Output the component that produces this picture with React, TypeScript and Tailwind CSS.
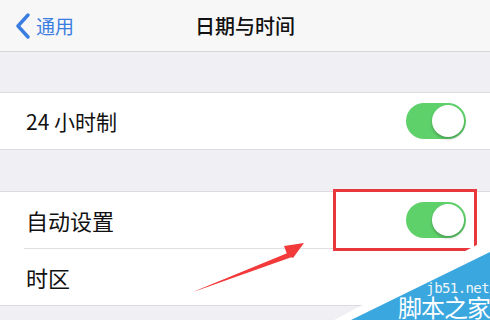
import React from "react";

function Toggle() {
  return (
    <div className="relative h-[36px] w-[60px] rounded-full bg-[#5fd16b]">
      <div className="absolute right-[2px] top-[2px] h-[32px] w-[32px] rounded-full bg-white shadow-[0_2px_3px_rgba(0,0,0,0.25)]" />
    </div>
  );
}

export default function App() {
  return (
    <div
      className="relative h-[320px] w-[490px] overflow-hidden bg-[#efeff4]"
      style={{ fontFamily: '"Noto Sans CJK SC", "Noto Sans", sans-serif' }}
    >
      {/* Nav bar */}
      <div className="relative flex h-[52px] items-center border-b border-[#d6d6da] bg-[#f7f7f8]">
        <div className="flex items-center pl-[14px] text-[#3a7de0]">
          <svg width="18" height="26" viewBox="0 0 18 26">
            <path d="M14 2 L4 13 L14 24" fill="none" stroke="#3a7de0" strokeWidth="3.4" strokeLinecap="round" strokeLinejoin="round" />
          </svg>
          <span className="ml-[4px] text-[19px] leading-none">通用</span>
        </div>
        <div className="absolute inset-0 flex items-center justify-center">
          <span className="text-[20px] font-medium leading-none text-[#111]">日期与时间</span>
        </div>
      </div>

      <div className="h-[40px]" />

      {/* Group 1 */}
      <div className="border-y border-[#dcdce0] bg-white">
        <div className="flex h-[56px] items-center justify-between pl-[26px] pr-[24px]">
          <span className="text-[21px] leading-none text-[#111]">24 小时制</span>
          <Toggle />
        </div>
      </div>

      <div className="h-[41px]" />

      {/* Group 2 */}
      <div className="border-y border-[#dcdce0] bg-white">
        <div className="flex h-[56px] items-center justify-between pl-[26px] pr-[24px]">
          <span className="text-[22px] leading-none text-[#111]">自动设置</span>
          <Toggle />
        </div>
        <div className="ml-[24px] h-px bg-[#e0e0e4]" />
        <div className="flex h-[56px] items-center pl-[26px]">
          <span className="text-[22px] leading-none text-[#111]">时区</span>
        </div>
      </div>

      {/* Red highlight box */}
      <div className="absolute left-[333px] top-[189px] h-[62px] w-[144px] border-[3px] border-[#e8383c]" />

      {/* Arrow */}
      <svg className="absolute left-0 top-0" width="490" height="320" viewBox="0 0 490 320">
        <polygon points="193,292 287,254 284,246 304,243 293,258 289,256" fill="#f23a3a" />
        <polygon points="193,292 290,252 292,257" fill="#f23a3a" />
      </svg>

      {/* Watermark */}
      <svg className="absolute left-0 top-0" width="490" height="320" viewBox="0 0 490 320">
        <polygon points="490,238 490,320 334,320" fill="#ffffff" />
        <polygon points="490,252 490,320 351,320" fill="#3aa7df" />
      </svg>
      <div
        className="absolute right-[1px] top-[281px] text-[14px] leading-none tracking-[-0.6px] text-[#eef6fb]"
        style={{ fontFamily: '"DejaVu Sans Mono", monospace' }}
      >
        jb51.net
      </div>
      <div className="absolute right-[0px] top-[295px] text-[24px] leading-none tracking-[-1px] text-white">
        脚本之家
      </div>
    </div>
  );
}
